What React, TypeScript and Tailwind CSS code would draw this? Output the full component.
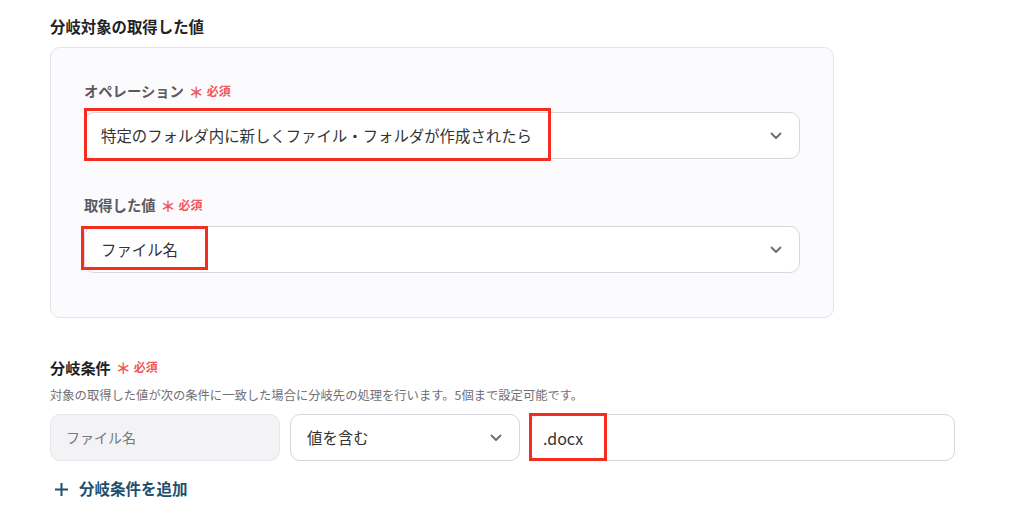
import React from "react";

function Chevron() {
  return (
    <svg width="12" height="8" viewBox="0 0 12 8" fill="none" className="shrink-0">
      <path d="M1.5 1.5L6 6l4.5-4.5" stroke="#6b6b70" strokeWidth="1.8" strokeLinecap="round" strokeLinejoin="round" />
    </svg>
  );
}

function Required() {
  return (
    <span className="ml-[5px] inline-flex items-center text-[12px] font-semibold text-[#f0565a]">
      <span className="mr-[3px] text-[15px] leading-none">＊</span>必須
    </span>
  );
}

function Select({ value, width }: { value: string; width: string }) {
  return (
    <div
      className={`flex h-[47px] ${width} items-center justify-between rounded-[10px] border border-[#d8d7de] bg-white pl-[16px] pr-[17px]`}
    >
      <span className="text-[15.4px] text-[#333]">{value}</span>
      <Chevron />
    </div>
  );
}

function Mark({ className }: { className: string }) {
  return <div className={`pointer-events-none absolute border-[3px] border-[#f42d1f] ${className}`} />;
}

export default function App() {
  return (
    <div className="h-[524px] w-[1016px] overflow-hidden bg-white pl-[50px] pt-[14px] font-['Noto_Sans_CJK_JP',sans-serif] text-[#222]">
      <h2 className="text-[15.4px] font-bold leading-[24px]">分岐対象の取得した値</h2>

      <div className="mt-[9px] h-[271px] w-[784px] rounded-[10px] border border-[#e5e4ea] bg-[#fbfafc] pl-[33px] pt-[33px]">
        <div className="flex h-[20px] items-center text-[14.3px] font-semibold text-[#5a5a60]">
          オペレーション
          <Required />
        </div>
        <div className="relative mt-[11px] w-[716px]">
          <Select value="特定のフォルダ内に新しくファイル・フォルダが作成されたら" width="w-[716px]" />
          <Mark className="left-0 top-[-4px] h-[53px] w-[467px]" />
        </div>

        <div className="mt-[36px] flex h-[20px] items-center text-[14.3px] font-semibold text-[#5a5a60]">
          取得した値
          <Required />
        </div>
        <div className="relative mt-[11px] w-[716px]">
          <Select value="ファイル名" width="w-[716px]" />
          <Mark className="left-[-3px] top-0 h-[44px] w-[127px]" />
        </div>
      </div>

      <div className="mt-[39px] flex h-[20px] items-center text-[15.2px] font-bold text-[#222]">
        分岐条件
        <Required />
      </div>
      <p className="mt-[10px] text-[12.3px] leading-[16px] text-[#6f6f74]">
        対象の取得した値が次の条件に一致した場合に分岐先の処理を行います。5個まで設定可能です。
      </p>

      <div className="mt-[11px] flex gap-[10px]">
        <div className="flex h-[47px] w-[230px] items-center rounded-[10px] border border-[#e6e5ea] bg-[#f3f2f5] pl-[15px] text-[14px] text-[#77777c]">
          ファイル名
        </div>
        <Select value="値を含む" width="w-[230px]" />
        <div className="relative">
          <div className="flex h-[47px] w-[425px] items-center rounded-[10px] border border-[#d8d7de] bg-white pl-[12px] text-[16px] text-[#333]">
            .docx
          </div>
          <Mark className="left-[-1px] top-[-1px] h-[48px] w-[78px]" />
        </div>
      </div>

      <button type="button" className="mt-[18px] ml-[4px] flex h-[20px] items-center gap-[10px] text-[15.5px] font-bold text-[#1d4f6e]">
        <svg width="15" height="15" viewBox="0 0 15 15" fill="none">
          <path d="M7.5 1v13M1 7.5h13" stroke="#1d4f6e" strokeWidth="2" />
        </svg>
        分岐条件を追加
      </button>
    </div>
  );
}
